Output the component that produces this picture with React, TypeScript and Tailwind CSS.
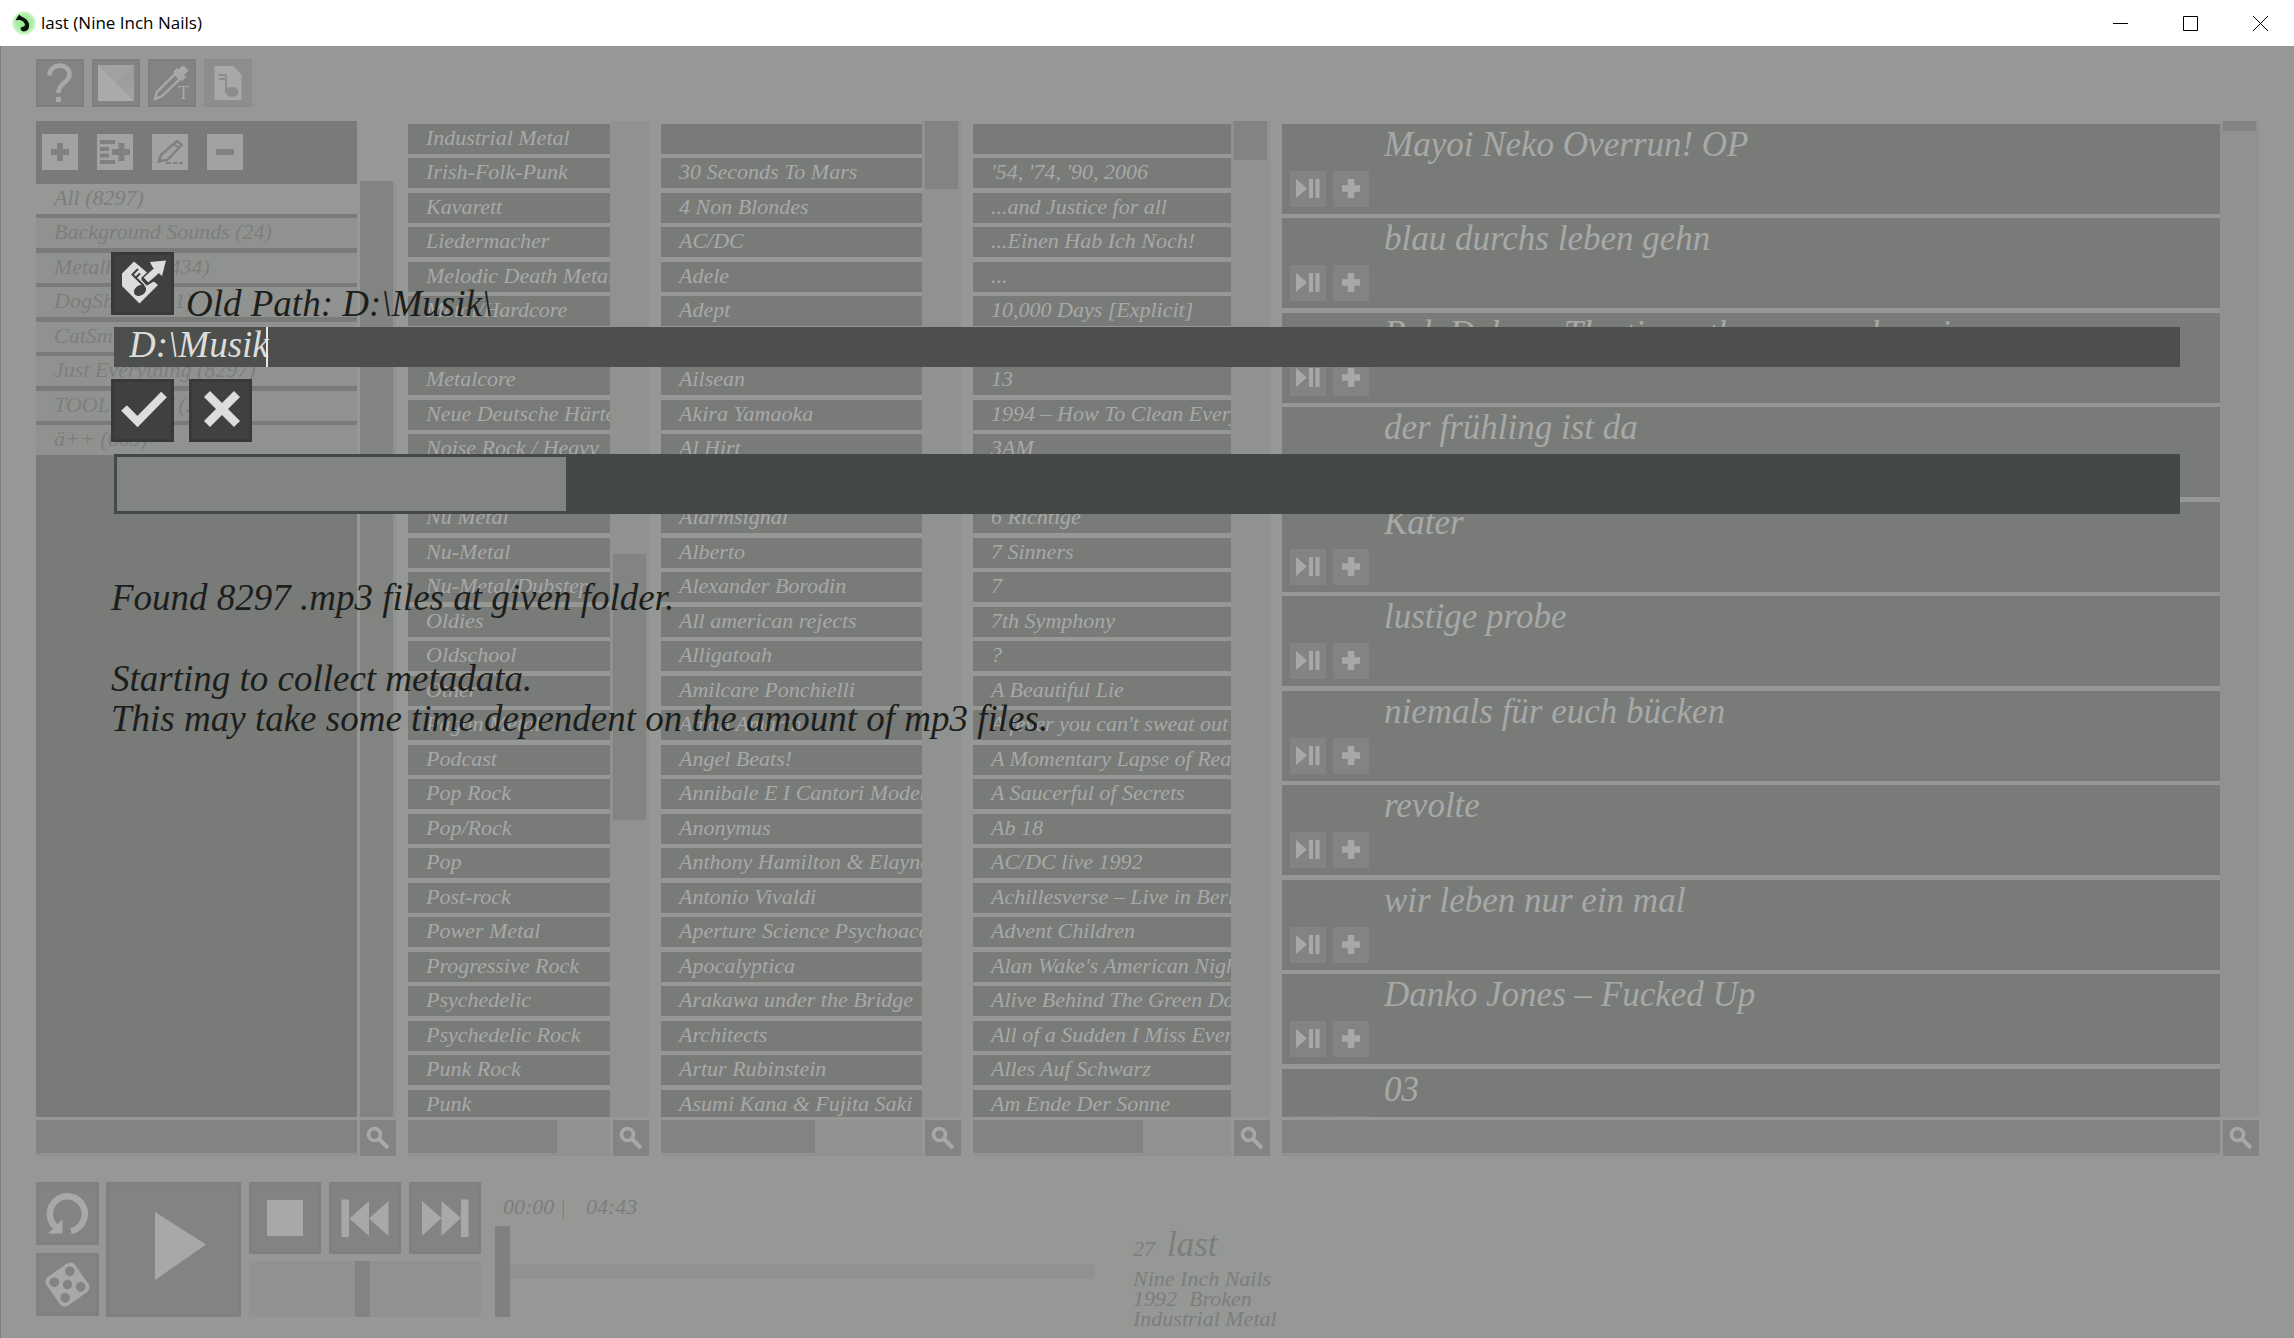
import type { ReactNode } from 'react';

const playlists = [
  'All (8297)',
  'Background Sounds (24)',
  'Metalheads (434)',
  'DogShouts (41)',
  'CatSmiles (12)',
  'Just Everything (8297)',
  'TOOL best of (22)',
  'ä++ (663)',
];

const genres = [
  'Industrial Metal', 'Irish-Folk-Punk', 'Kavarett', 'Liedermacher', 'Melodic Death Metal',
  'Metal/Hardcore', '', 'Metalcore', 'Neue Deutsche Härte', 'Noise Rock / Heavy', '',
  'Nu Metal', 'Nu-Metal', 'Nu-Metal/Dubstep', 'Oldies', 'Oldschool', 'Other', 'Pagan Metal',
  'Podcast', 'Pop Rock', 'Pop/Rock', 'Pop', 'Post-rock', 'Power Metal', 'Progressive Rock',
  'Psychedelic', 'Psychedelic Rock', 'Punk Rock', 'Punk',
];

const artists = [
  '', '30 Seconds To Mars', '4 Non Blondes', 'AC/DC', 'Adele', 'Adept', '', 'Ailsean',
  'Akira Yamaoka', 'Al Hirt', '', 'Alarmsignal', 'Alberto', 'Alexander Borodin',
  'All american rejects', 'Alligatoah', 'Amilcare Ponchielli', 'Amon Amarth', 'Angel Beats!',
  'Annibale E I Cantori Moderni', 'Anonymus', 'Anthony Hamilton & Elayna Boynton',
  'Antonio Vivaldi', 'Aperture Science Psychoacoustic', 'Apocalyptica',
  'Arakawa under the Bridge', 'Architects', 'Artur Rubinstein', 'Asumi Kana & Fujita Saki',
];

const albums = [
  '', "'54, '74, '90, 2006", '...and Justice for all', '...Einen Hab Ich Noch!', '...',
  '10,000 Days [Explicit]', '', '13', '1994 – How To Clean Everything', '3AM', '',
  '6 Richtige', '7 Sinners', '7', '7th Symphony', '?', 'A Beautiful Lie',
  "A fever you can't sweat out", 'A Momentary Lapse of Reason', 'A Saucerful of Secrets',
  'Ab 18', 'AC/DC live 1992', 'Achillesverse – Live in Berlin', 'Advent Children',
  "Alan Wake's American Nightmare", 'Alive Behind The Green Door',
  'All of a Sudden I Miss Everyone', 'Alles Auf Schwarz', 'Am Ende Der Sonne',
];

const tracks = [
  'Mayoi Neko Overrun! OP',
  'blau durchs leben gehn',
  'Bob Dylan - The times they are a changin',
  'der frühling ist da',
  'Kater',
  'lustige probe',
  'niemals für euch bücken',
  'revolte',
  'wir leben nur ein mal',
  'Danko Jones – Fucked Up',
  '03',
];

function IconButton({ label, className, children }: { label: string; className: string; children: ReactNode }) {
  return (
    <button type="button" aria-label={label} className={`flex shrink-0 items-center justify-center ${className}`}>
      {children}
    </button>
  );
}

function SearchButton() {
  return (
    <IconButton label="Search" className="size-9 bg-[#828482] text-[#a7a9a7]">
      <svg viewBox="0 0 36 36" className="size-9" fill="none" stroke="currentColor">
        <circle cx="14.5" cy="14.5" r="6" strokeWidth="3.6" />
        <path d="M19 19l9 9" strokeWidth="4" />
      </svg>
    </IconButton>
  );
}

function Gutter({ start, size }: { start: number; size: number }) {
  return (
    <div className="relative w-[39px] shrink-0 bg-[#909290]">
      <div
        className="absolute left-[3px] w-[33px] bg-[#828482]"
        style={{ top: `${start}%`, height: `${size}%` }}
      />
    </div>
  );
}

function ColumnFooter({ fill }: { fill: number }) {
  return (
    <div className="mt-[3px] flex gap-[3px]">
      <div className="h-9 min-w-0 flex-1 bg-[#909290]">
        <div className="h-[33px] bg-[#828482]" style={{ width: `${fill}%` }} />
      </div>
      <SearchButton />
    </div>
  );
}

function Column({ items, start, size, fill }: { items: string[]; start: number; size: number; fill: number }) {
  return (
    <section className="flex min-h-0 min-w-0 flex-col">
      <div className="flex min-h-0 flex-1">
        <ul className="min-w-0 flex-1 overflow-hidden pt-[3px]">
          {items.map((item, i) => (
            <li
              key={i}
              className="mb-1 h-[30px] overflow-hidden bg-[#797b79] pl-[18px] text-[22px] leading-7 whitespace-nowrap text-[#a7a9a7] even:mb-[5px]"
            >
              {item}
            </li>
          ))}
        </ul>
        <Gutter start={start} size={size} />
      </div>
      <ColumnFooter fill={fill} />
    </section>
  );
}

function Toolbar() {
  return (
    <div className="mb-[14px] flex gap-2">
      <IconButton label="Help" className="size-12 border-2 border-[#7d7f7d] bg-[#828482] text-[#a7a9a7]">
        <svg viewBox="0 0 44 44" className="size-11" fill="none" stroke="currentColor">
          <path d="M11.500 14.500c0-13 20-13 20-1 0 8-11 8-11 18.500" strokeWidth="4.6" />
          <rect x="18" y="36" width="5" height="5" fill="currentColor" stroke="none" />
        </svg>
      </IconButton>
      <IconButton label="Theme" className="size-12 border-2 border-[#7d7f7d] bg-[#828482]">
        <svg viewBox="0 0 44 44" className="size-11">
          <rect x="4" y="4" width="36" height="36" fill="#9c9e9c" />
          <path d="M4 4l18 18L40 4zM31 31l9-9v18z" fill="#a0a2a0" />
          <path d="M4 4v36h36z" fill="#a9aba9" />
        </svg>
      </IconButton>
      <IconButton label="Text colour" className="size-12 border-2 border-[#7d7f7d] bg-[#828482] text-[#a7a9a7]">
        <svg viewBox="0 0 44 44" className="size-11" fill="none" stroke="currentColor">
          <path d="M5 38l2-7 18-18 5 5-18 17z" strokeWidth="2.400" />
          <path d="M25 9l9 9M27 14l7-7" strokeWidth="5.500" />
          <path d="M30 13l6-6" strokeWidth="7" />
          <text x="28" y="38" fontSize="18" fontStyle="normal" fontFamily="Liberation Serif" fill="currentColor" stroke="none">T</text>
        </svg>
      </IconButton>
      <IconButton label="Music file" className="size-12 border-2 border-[#8a8c8a] bg-[#8c8e8c]">
        <svg viewBox="0 0 44 44" className="size-11">
          <path d="M8.500 5h19l8 9v25h-27z" fill="#a7a9a7" />
          <path d="M12 14h8v18M13 18h6" fill="none" stroke="#8c8e8c" strokeWidth="2" />
          <ellipse cx="26" cy="31" rx="6.500" ry="5" fill="#8c8e8c" />
        </svg>
      </IconButton>
    </div>
  );
}

function PlaylistColumn() {
  const tool = 'size-9 bg-[#a1a3a1] text-[#7f817f]';
  return (
    <section className="flex min-h-0 min-w-0 flex-col">
      <div className="flex min-h-0 flex-1">
        <div className="min-w-0 flex-1 overflow-hidden bg-[#797b79]">
          <div className="flex h-[63px] items-start gap-[19px] pt-[13px] pl-1.5">
            <IconButton label="Add playlist" className={tool}>
              <svg viewBox="0 0 36 36" className="size-9" stroke="currentColor" strokeWidth="6">
                <path d="M18 9v18M9 18h18" />
              </svg>
            </IconButton>
            <IconButton label="Add selection to playlist" className={tool}>
              <svg viewBox="0 0 36 36" className="size-9" stroke="currentColor">
                <path d="M3 8h15M3 15h9M3 21.500h9M3 28h15" strokeWidth="4" />
                <path d="M24.500 9v18M15 18h18" strokeWidth="6" />
              </svg>
            </IconButton>
            <IconButton label="Rename playlist" className={tool}>
              <svg viewBox="0 0 36 36" className="size-9" fill="none" stroke="currentColor">
                <path d="M7 27l2-6L25 7l5 4-15 15z" strokeWidth="2.400" strokeLinejoin="round" />
                <path d="M22 10l5 4" strokeWidth="2" />
                <path d="M5 29.500l2-6 4 4z" fill="currentColor" stroke="none" />
                <path d="M14 29h5M21 29h4M27 29h4" strokeWidth="2" />
              </svg>
            </IconButton>
            <IconButton label="Remove playlist" className={tool}>
              <svg viewBox="0 0 36 36" className="size-9" stroke="currentColor" strokeWidth="6">
                <path d="M9 18h18" />
              </svg>
            </IconButton>
          </div>
          <ul>
            {playlists.map((name) => (
              <li
                key={name}
                className="mb-1 h-[30px] overflow-hidden bg-[#909290] pl-[18px] text-[22px] leading-7 whitespace-nowrap text-[#7c7e7c] first:bg-[#969896] even:mb-[5px]"
              >
                {name}
              </li>
            ))}
          </ul>
        </div>
        <div className="flex w-[39px] shrink-0 pt-[60px] pl-[3px]">
          <div className="w-[33px] bg-[#828482]" />
          <div className="w-[3px] bg-[#909290]" />
        </div>
      </div>
      <ColumnFooter fill={100} />
    </section>
  );
}

function TrackColumn() {
  return (
    <section className="flex min-h-0 min-w-0 flex-col">
      <div className="flex min-h-0 flex-1">
        <ul className="min-w-0 flex-1 overflow-hidden pt-[3px]">
          {tracks.map((title) => (
            <li key={title} className="mb-1 flex h-[90px] gap-[15px] bg-[#797b79] pl-2 even:mb-[5px]">
              <div className="flex gap-[7px] pt-[47px]">
                <IconButton label={`Play ${title}`} className="size-9 bg-[#828482] text-[#a7a9a7]">
                  <svg viewBox="0 0 36 36" className="size-9" fill="currentColor">
                    <path d="M6 8l11 9.500L6 27zM19 8h4v19h-4zM25.500 8h4v19h-4z" />
                  </svg>
                </IconButton>
                <IconButton label={`Add ${title}`} className="size-9 bg-[#828482] text-[#a7a9a7]">
                  <svg viewBox="0 0 36 36" className="size-9" stroke="currentColor" strokeWidth="6.500">
                    <path d="M18 8v19M9 17.500h18" />
                  </svg>
                </IconButton>
              </div>
              <span className="text-[35px] leading-[42px] whitespace-nowrap text-[#a7a9a7]">{title}</span>
            </li>
          ))}
        </ul>
        <Gutter start={0} size={1} />
      </div>
      <ColumnFooter fill={100} />
    </section>
  );
}

function Player() {
  const button = 'border-[3px] border-[#7f817f] bg-[#828482] text-[#a7a9a7]';
  return (
    <footer className="mt-[26px] flex h-[135px] items-start text-[#7c7e7c]">
      <div className="mr-[7px] flex flex-col gap-2">
        <IconButton label="Repeat" className={`size-[63px] ${button}`}>
          <svg viewBox="0 0 63 63" className="size-[63px] shrink-0">
            <path d="M35 49A17.500 17.500 0 1 0 21 46" fill="none" stroke="currentColor" strokeWidth="6.500" />
            <path d="M12 51.500h14.500V37z" fill="currentColor" />
          </svg>
        </IconButton>
        <IconButton label="Shuffle" className={`size-[63px] ${button}`}>
          <svg viewBox="0 0 63 63" className="size-[63px] shrink-0">
            <g transform="rotate(-35 31.500 31.500)">
              <rect x="14" y="14" width="35" height="35" rx="6" fill="currentColor" />
              <g fill="#828482">
                <circle cx="31.500" cy="31.500" r="4.700" />
                <circle cx="41" cy="22" r="4.900" />
                <circle cx="22" cy="22" r="4.900" />
                <circle cx="41" cy="41" r="4.900" />
                <circle cx="22" cy="41" r="4.900" />
              </g>
            </g>
          </svg>
        </IconButton>
      </div>
      <IconButton label="Play" className={`mr-2 size-[135px] ${button}`}>
        <svg viewBox="0 0 135 135" className="size-[135px] shrink-0" fill="currentColor">
          <path d="M49 30l51 32.500L49 98z" />
        </svg>
      </IconButton>
      <div className="mr-[14px] flex flex-col gap-[7px]">
        <div className="flex gap-2">
          <IconButton label="Stop" className={`size-[72px] ${button}`}>
            <svg viewBox="0 0 72 72" className="size-[72px] shrink-0" fill="currentColor">
              <path d="M18 18h36v36H18z" />
            </svg>
          </IconButton>
          <IconButton label="Previous" className={`size-[72px] ${button}`}>
            <svg viewBox="0 0 72 72" className="size-[72px] shrink-0" fill="currentColor">
              <path d="M12.500 17.500H20v37.500h-7.500zM40 19v35L20.500 36.500zM59.500 19v35L40 36.500z" />
            </svg>
          </IconButton>
          <IconButton label="Next" className={`size-[72px] ${button}`}>
            <svg viewBox="0 0 72 72" className="size-[72px] shrink-0" fill="currentColor">
              <path d="M13 19l19.500 17L13 54zM32.500 19L52 36 32.500 54zM52 17.500h7.500v37.500H52z" />
            </svg>
          </IconButton>
        </div>
        <input
          type="range"
          aria-label="Volume"
          defaultValue={49}
          className="h-14 w-full appearance-none bg-[#909290] [&::-webkit-slider-thumb]:h-14 [&::-webkit-slider-thumb]:w-[15px] [&::-webkit-slider-thumb]:appearance-none [&::-webkit-slider-thumb]:bg-[#828482]"
        />
      </div>
      <div className="flex w-[600px] flex-col pt-3">
        <div className="mb-[6px] flex h-[26px] gap-5 pl-2 text-[22px] leading-[26px]">
          <span>00:00 |</span>
          <span>04:43</span>
        </div>
        <input
          type="range"
          aria-label="Position"
          defaultValue={0}
          className="h-[91px] w-full appearance-none bg-transparent [&::-webkit-slider-runnable-track]:h-[15px] [&::-webkit-slider-runnable-track]:bg-[#909290] [&::-webkit-slider-thumb]:-mt-[38px] [&::-webkit-slider-thumb]:h-[91px] [&::-webkit-slider-thumb]:w-[15px] [&::-webkit-slider-thumb]:appearance-none [&::-webkit-slider-thumb]:bg-[#7f817f]"
        />
      </div>
      <div className="ml-[38px] flex flex-col pt-[43px] whitespace-nowrap">
        <div className="mb-1 flex h-10 items-baseline gap-3">
          <span className="text-[22px] leading-6">27</span>
          <span className="text-[35px] leading-10">last</span>
        </div>
        <p className="text-[22px] leading-5">Nine Inch Nails</p>
        <p className="flex gap-3 text-[22px] leading-5">
          <span>1992</span>
          <span>Broken</span>
        </p>
        <p className="text-[22px] leading-5">Industrial Metal</p>
      </div>
    </footer>
  );
}

function PathDialog() {
  const button = 'size-[63px] border-[3px] border-[#383a38] bg-[#3f413f] text-[#dcdedc]';
  return (
    <div role="dialog" aria-label="Change music path" className="absolute inset-0 pt-[206px] pr-[114px] pl-[110px] text-[#1c1e1c]">
      <div className="flex h-[75px] items-start gap-3">
        <IconButton label="Move library" className={button}>
          <svg viewBox="0 0 63 63" className="size-[63px] shrink-0" fill="currentColor">
            <path d="M23 9.500L11 21.500V34L28.500 51.500 47 33 43 29.500 36 33 30 26 36 20.500z" />
            <path d="M35 28L49 15.500" stroke="currentColor" strokeWidth="7" />
            <path d="M39 10l16-1.500L51 24l-4.500-4-5-5z" />
            <path d="M21 23l6-6M24 26.500l5-5M21 22l12 12M31 27l5 5.500 7-5" fill="none" stroke="#3f413f" strokeWidth="2" />
            <ellipse cx="29" cy="38.500" rx="6.500" ry="5" transform="rotate(-35 29 38.500)" fill="#3f413f" />
          </svg>
        </IconButton>
        <label htmlFor="path" className="mt-8 text-[37px] leading-10 whitespace-nowrap">
          Old Path: D:\Musik\
        </label>
      </div>
      <div className="relative ml-[3px] h-10">
        <input
          id="path"
          type="text"
          defaultValue="D:\Musik"
          className="block h-10 w-full bg-[#4d4f4d] pb-1.5 pl-[15px] text-[37px] leading-8 text-[#dcdedc] outline-none"
        />
        <span className="absolute top-0 left-[152px] h-10 w-0.5 bg-[#e6e8e6]" />
      </div>
      <div className="mt-3 flex gap-[15px]">
        <IconButton label="Confirm" className={button}>
          <svg viewBox="0 0 63 63" className="size-[63px] shrink-0" fill="none" stroke="currentColor" strokeWidth="8">
            <path d="M13 29l13.500 13.500L53 15.500" />
          </svg>
        </IconButton>
        <IconButton label="Cancel" className={button}>
          <svg viewBox="0 0 63 63" className="size-[63px] shrink-0" fill="none" stroke="currentColor" strokeWidth="8.500">
            <path d="M18 15l30 30M48 15L18 45" />
          </svg>
        </IconButton>
      </div>
      <div
        role="progressbar"
        aria-label="Import progress"
        aria-valuenow={22}
        className="mt-3 ml-[3px] h-[60px] border-[3px] border-[#454849] bg-[#454849]"
      >
        <div className="h-full w-[21.8%] bg-[#828482]" />
      </div>
      <div className="mt-16 text-[37px] leading-10 whitespace-nowrap">
        <p className="mb-[41px]">Found 8297 .mp3 files at given folder.</p>
        <p>Starting to collect metadata.</p>
        <p>This may take some time dependent on the amount of mp3 files.</p>
      </div>
    </div>
  );
}

function TitleBar() {
  return (
    <header className="flex h-[46px] shrink-0 items-center bg-white pl-3 text-black">
      <svg viewBox="0 0 24 24" className="mr-[5px] size-6">
        <defs>
          <radialGradient id="glow">
            <stop offset="0.600" stopColor="#a4eda0" />
            <stop offset="0.850" stopColor="#c2f2bd" />
            <stop offset="1" stopColor="#e8fbe6" />
          </radialGradient>
        </defs>
        <circle cx="12" cy="12" r="12" fill="url(#glow)" />
        <path d="M3.500 9.500C5 6 6.500 4.500 7.500 3.500c1 2.500 4.500 2.500 7 5 3 3 3.500 7 1.500 10-2 2.500-6 2.500-7 .5-1-2.500 1-3.500 3-3.500 1.500-1 1-3-.5-4.500-2-2-5-2.500-8-1.500z" fill="#0c150c" />
      </svg>
      <h1 className="flex-1 font-['Open_Sans',sans-serif] text-[17px] leading-6">last (Nine Inch Nails)</h1>
      <div className="flex gap-[2px]">
        <button type="button" aria-label="Minimize" className="flex h-[46px] w-[68px] items-center justify-center">
          <svg viewBox="0 0 15 15" className="size-[15px]" stroke="currentColor"><path d="M0 7.500h15" /></svg>
        </button>
        <button type="button" aria-label="Maximize" className="flex h-[46px] w-[68px] items-center justify-center">
          <svg viewBox="0 0 15 15" className="size-[15px]" fill="none" stroke="currentColor"><path d="M.5.5h14v14H.5z" /></svg>
        </button>
        <button type="button" aria-label="Close" className="flex h-[46px] w-[68px] items-center justify-center">
          <svg viewBox="0 0 15 15" className="size-[15px]" stroke="currentColor"><path d="M0 0l15 15M15 0L0 15" /></svg>
        </button>
      </div>
    </header>
  );
}

export default function App() {
  return (
    <div className="flex h-screen flex-col overflow-hidden font-['Liberation_Serif',serif]">
      <TitleBar />
      <div className="relative flex min-h-0 flex-1 flex-col border-l border-[#7c7e7c] bg-[#969896] pt-[13px] pr-[35px] pb-[21px] pl-[35px] italic">
        <Toolbar />
        <main className="grid min-h-0 flex-1 grid-cols-[minmax(0,360fr)_minmax(0,241fr)_minmax(0,300fr)_minmax(0,297fr)_minmax(0,977fr)] grid-rows-[minmax(0,1fr)] gap-3">
          <PlaylistColumn />
          <Column items={genres} start={43.5} size={26.7} fill={74} />
          <Column items={artists} start={0} size={6.8} fill={59} />
          <Column items={albums} start={0} size={3.9} fill={66} />
          <TrackColumn />
        </main>
        <Player />
        <PathDialog />
      </div>
    </div>
  );
}
